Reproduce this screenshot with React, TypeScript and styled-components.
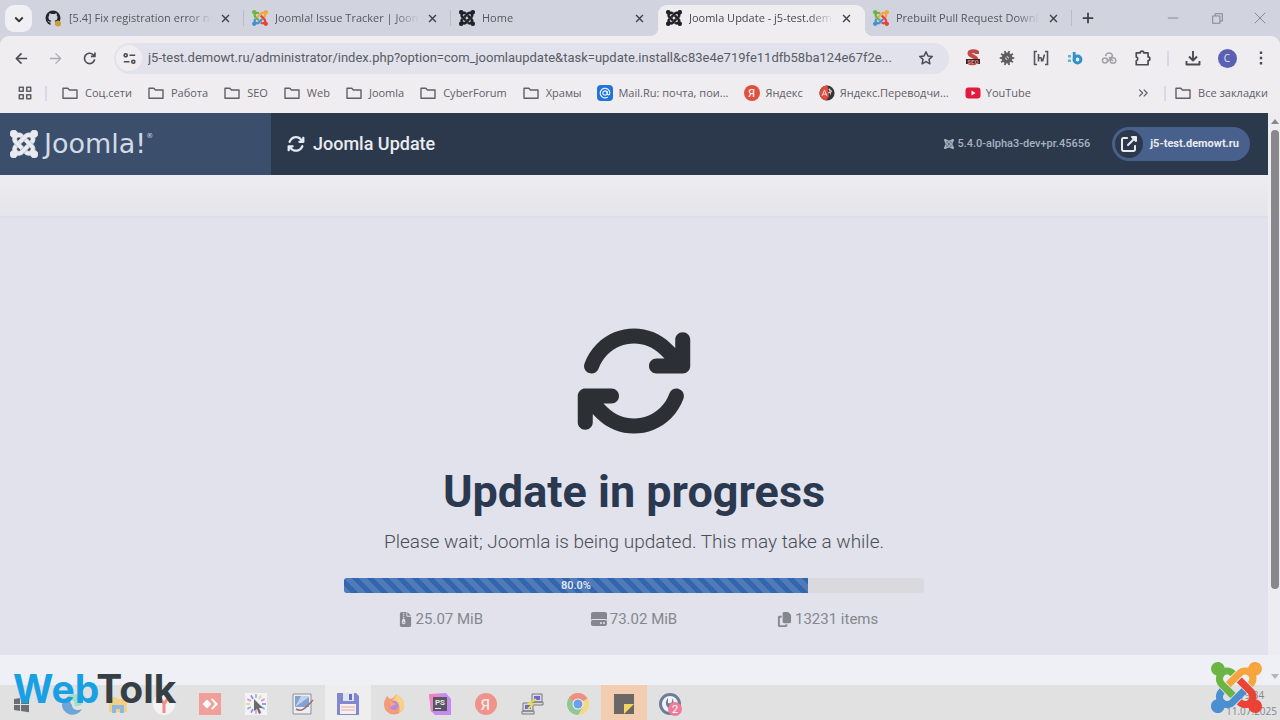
import React from 'react';
import styled, { createGlobalStyle, css } from 'styled-components';
import {
  FaArrowsRotate,
  FaCopy,
  FaFileZipper,
  FaHardDrive,
  FaUpRightFromSquare,
} from 'react-icons/fa6';

const ui = '"Open Sans", "Noto Sans", sans-serif';

const Global = createGlobalStyle`
  *, *::before, *::after { box-sizing: border-box; }
  body { margin: 0; background: #e1e2eb; font-family: Roboto, sans-serif; }
  button { border: 0; padding: 0; background: none; font: inherit; color: inherit; cursor: pointer; }
  a { color: inherit; text-decoration: none; }
  svg { display: block; flex: none; }
`;

const Screen = styled.div`
  display: flex;
  flex-direction: column;
  min-height: 100vh;
`;

/* ---------- browser chrome ---------- */

const TabStrip = styled.div`
  display: flex;
  height: 36px;
  padding-left: 5px;
  background: #d1d4df;
  font: 11px/16px ${ui};
  color: #55575f;
`;

const TabSearch = styled.button`
  display: grid;
  place-items: center;
  width: 27px;
  height: 27px;
  margin: 5px 5px 0 0;
  border-radius: 9px;
  background: #f0eff4;
`;

const Tab = styled.div<{ $active?: boolean; $line?: boolean }>`
  position: relative;
  display: flex;
  align-items: center;
  flex: 0 1 207px;
  min-width: 0;
  gap: 7px;
  height: 31px;
  margin-top: 5px;
  padding: 0 13px 5px 8px;
  ${(p) =>
    p.$line &&
    css`
      &::after {
        content: '';
        position: absolute;
        right: 0;
        top: 5px;
        width: 1px;
        height: 16px;
        background: #b9bcc8;
      }
    `}
  ${(p) =>
    p.$active &&
    css`
      border-radius: 9px 9px 0 0;
      background: #f0edf1;
      color: #45464d;
      &::before,
      &::after {
        content: '';
        position: absolute;
        bottom: 0;
        width: 8px;
        height: 8px;
      }
      &::before {
        left: -8px;
        background: radial-gradient(circle at 0 0, transparent 8px, #f0edf1 8px);
      }
      &::after {
        right: -8px;
        background: radial-gradient(circle at 100% 0, transparent 8px, #f0edf1 8px);
      }
    `}
`;

const TabTitle = styled.span`
  flex: 1;
  min-width: 0;
  overflow: hidden;
  white-space: nowrap;
  mask-image: linear-gradient(to right, #000 calc(100% - 24px), transparent);
`;

const IconButton = styled.button<{ $w?: number }>`
  display: grid;
  place-items: center;
  flex: none;
  width: ${(p) => p.$w ?? 34}px;
  height: 26px;
`;

const NewTab = styled(IconButton)`
  margin: 5px 0 0 1px;
`;

const WindowControls = styled.div`
  display: flex;
  align-items: center;
  margin-left: auto;
  color: #85878f;
`;

const Toolbar = styled.div`
  display: flex;
  align-items: center;
  height: 44px;
  padding: 0 2px 0 4px;
  border-radius: 9px 9px 0 0;
  background: #f0edf1;
  color: #4b4c52;
`;

const ToolbarBack = styled.div`
  background: #d1d4df;
`;

const AddressBar = styled.div`
  display: flex;
  align-items: center;
  flex: 1;
  min-width: 0;
  height: 31px;
  margin: 0 7px 0 8px;
  padding: 0 8px 0 2px;
  border-radius: 16px;
  background: #e1e2ec;
`;

const SiteInfo = styled(IconButton)`
  border-radius: 13px;
  background: #f0edf1;
`;

const Address = styled.input`
  flex: 1;
  min-width: 0;
  margin-left: 6px;
  padding: 0;
  border: 0;
  outline: 0;
  background: none;
  font: 13px/20px Roboto, sans-serif;
  color: #5a5b63;
  text-overflow: ellipsis;
`;

const Divider = styled.span<{ $gap: number }>`
  flex: none;
  width: 2px;
  height: 15px;
  margin: 0 ${(p) => p.$gap}px;
  background: #d6d9ea;
`;

const Avatar = styled.span`
  display: grid;
  place-items: center;
  width: 19px;
  height: 19px;
  border-radius: 50%;
  background: #5a60b4;
  color: #e4e5f5;
  font: 10px/12px ${ui};
`;

const Bookmarks = styled.nav`
  display: flex;
  align-items: center;
  height: 33px;
  padding: 0 12px 7px 8px;
  background: #f0edf1;
  font: 11px/16px ${ui};
  color: #5f6066;
`;

const BookmarkList = styled.div`
  display: flex;
  flex: 1;
  min-width: 0;
  gap: 16px;
  margin-left: 12px;
  overflow: hidden;
`;

const Bookmark = styled.a<{ $site?: boolean }>`
  display: flex;
  align-items: center;
  gap: ${(p) => (p.$site ? 5 : 7)}px;
  white-space: nowrap;
`;

/* ---------- page ---------- */

const Viewport = styled.div`
  display: flex;
  flex: 1;
`;

const Page = styled.div`
  display: flex;
  flex-direction: column;
  flex: 1;
  min-width: 0;
`;

const Header = styled.header`
  display: flex;
  align-items: center;
  height: 62px;
  padding-right: 18px;
  background: #2c394d;
  color: #e9ebf0;
`;

const Brand = styled.a`
  display: flex;
  align-items: center;
  align-self: stretch;
  gap: 6px;
  width: 271px;
  padding-left: 10px;
  background: #3b4f6d;
`;

const Wordmark = styled.span`
  display: flex;
  font: 400 27px/32px "DejaVu Sans", sans-serif;
  color: #d3dae6;
`;

const Registered = styled.small`
  font-size: 7px;
  line-height: 16px;
`;

const PageTitle = styled.h1`
  display: flex;
  align-items: center;
  flex: 1;
  gap: 8px;
  margin: 0 0 0 16px;
  font: 500 18px/24px Roboto, sans-serif;
`;

const Version = styled.span`
  display: flex;
  align-items: center;
  gap: 3px;
  margin-right: 22px;
  font: 500 11px/16px Roboto, sans-serif;
  color: #a9b1c0;
`;

const SiteLink = styled.a`
  display: flex;
  align-items: center;
  gap: 7px;
  height: 34px;
  padding: 0 11px 0 3px;
  border-radius: 17px;
  background: #47618c;
  font: 700 11px/16px Roboto, sans-serif;
`;

const LinkBadge = styled.span`
  display: grid;
  place-items: center;
  width: 28px;
  height: 28px;
  border-radius: 50%;
  background: #2c394d;
`;

const Subhead = styled.div`
  height: 41px;
  background: linear-gradient(#edecf0, #e5e4ea);
`;

const UpdateCard = styled.main`
  display: flex;
  flex-direction: column;
  align-items: center;
  flex: 1;
  padding: 103px 16px 24px;
  border-top: 2px solid #dcdeea;
  background: #e1e2eb;
  color: #2c2f34;
`;

const Heading = styled.h2`
  margin: 24px 0 8px;
  font: 700 45px/54px Roboto, sans-serif;
  color: #2b3950;
`;

const Lead = styled.p`
  margin: 0 0 21px;
  font: 300 19px/30px Roboto, sans-serif;
  color: #4a4d55;
`;

const Progress = styled.div`
  width: 47%;
  height: 15px;
  border-radius: 3px;
  background: #d9d9de;
  overflow: hidden;
`;

const ProgressFill = styled.div`
  height: 100%;
  background: linear-gradient(
      45deg,
      rgba(255, 255, 255, 0.14) 25%,
      transparent 25%,
      transparent 50%,
      rgba(255, 255, 255, 0.14) 50%,
      rgba(255, 255, 255, 0.14) 75%,
      transparent 75%
    )
    0 0 / 15px 15px #3266ae;
  color: #e8ecf5;
  font: 500 11px/15px Roboto, sans-serif;
  text-align: center;
`;

const Stats = styled.div`
  display: grid;
  grid-template-columns: repeat(3, 1fr);
  width: 47%;
  margin-top: 14px;
`;

const Stat = styled.span`
  display: flex;
  align-items: center;
  justify-content: center;
  gap: 3px;
  font: 15px/24px Roboto, sans-serif;
  color: #85878f;
`;

const Scrollbar = styled.div`
  display: flex;
  flex-direction: column;
  align-items: center;
  width: 12px;
  padding: 6px 0 66px 2px;
  background: #edecf0;
`;

const Thumb = styled.div`
  width: 8px;
  flex: 1;
  margin-top: 6px;
  border-radius: 4px;
  background: #88888c;
`;

/* ---------- desktop bar with the channel branding ---------- */

const Dock = styled.footer`
  position: relative;
`;

const Haze = styled.div`
  display: flex;
  justify-content: flex-end;
  align-items: flex-end;
  height: 30px;
  padding: 0 0 6px;
  background: #eff0f5;
`;

const Taskbar = styled.div`
  display: flex;
  height: 35px;
  background: #e1e1e2;
`;

const Task = styled.button<{ $bg?: string; $first?: boolean }>`
  display: grid;
  place-items: center;
  flex: none;
  width: ${(p) => (p.$first ? 49 : 46)}px;
  padding-top: 3px;
  background: ${(p) => p.$bg ?? 'transparent'};
`;

const Clock = styled.time`
  margin: 2px 3px 0 auto;
  font: 10px/16px ${ui};
  color: #85858a;
  text-align: center;
  white-space: pre-line;
`;

const ChannelName = styled.div`
  position: absolute;
  left: 13px;
  top: 12px;
  font: 700 39px/44px Inter, sans-serif;
  color: #363f45;
`;

const ChannelAccent = styled.span`
  color: #18a0e4;
`;

const CornerLogo = styled.div`
  position: absolute;
  right: 18px;
  top: 7px;
`;

/* ---------- drawings ---------- */

const armPaths = [
  'M.6 92.1C.6 58.8 27.4 32 60.4 32c30 0 54.5 21.9 59.2 50.2 32.6-7.6 67.1.6 96.5 30l-44.3 44.3c-20.5-20.5-42.6-16.3-55.4-3.5-14.3 14.3-14.3 37.9 0 52.2l99.5 99.5-44 44.3c-87.7-87.2-49.7-49.7-99.8-99.7-26.8-26.5-35-64.8-24.8-98.9C20.4 144.6.6 120.7.6 92.1z',
  'M130.1 208.5l44.3 44.3c10-10 89.7-89.7 99.7-99.8 14.3-14.3 37.6-14.3 51.9 0 12.8 12.8 17 35-3.5 55.4l44 44.3c31.2-31.2 38.5-67.6 28.9-101.2 29.2-4.1 51.9-29.2 51.9-59.5 0-33.2-26.8-60.1-59.8-60.1-30.3 0-55.4 22.5-59.5 51.6-33.8-9.9-71.7-1.5-98.3 25.1-18.3 19.1-71.1 71.5-99.6 99.9z',
  'M396.4 360.7c8.2-32.7-.9-68.5-26.3-93.9-11.8-12.2 5 4.7-99.5-99.7l-44.3 44.3 99.7 99.7c14.3 14.3 14.3 37.6 0 51.9-12.8 12.8-35 17-55.4-3.5l-44 44.3c27.6 30.2 68 38.8 102.7 28 5.5 27.4 29.7 48.1 58.9 48.1 33 0 59.8-26.8 59.8-60.1 0-30.2-22.5-55-51.6-59.1z',
  'M312.1 307.6l-44-44.3c-87 86.4-50.4 50.4-99.7 99.8-14.3 14.3-37.6 14.3-51.9 0-13.1-13.4-16.9-35.3 3.2-55.4l-44-44.3c-30.2 30.2-38 65.2-29.5 98.3-26.7 6-46.2 29.9-46.2 58.2C0 453.2 26.8 480 59.8 480c28.6 0 52.5-19.8 58.6-46.7 32.7 8.2 68.5-.6 94.2-26 32.1-32 12.2-12.4 99.5-99.7z',
];

const brandColors = ['#6cb544', '#f6a53c', '#ea4335', '#4a8fd0'];

const JoomlaMark = ({ size, color }: { size: number; color?: string }) => (
  <svg width={size} height={size} viewBox="0 32 448 448" aria-hidden="true">
    {armPaths.map((d, i) => (
      <path key={i} d={d} fill={color ?? brandColors[i]} stroke={color} strokeWidth={color ? 12 : 0} />
    ))}
  </svg>
);

type LineProps = { d: string; size?: number; w?: number; color?: string };
const Line = ({ d, size = 16, w = 1.5, color = 'currentColor' }: LineProps) => (
  <svg width={size} height={size} viewBox="0 0 16 16" fill="none" stroke={color} strokeWidth={w} strokeLinejoin="round" aria-hidden="true">
    <path d={d} />
  </svg>
);

const Folder = () => <Line d="M1 3.200h4.800l1.600 1.800H15v8.300H1z" w={1.4} />;

const GitHubMark = () => (
  <svg width="17" height="17" viewBox="0 0 17 17" aria-hidden="true">
    <circle cx="8" cy="8" r="7.500" fill="#23242c" />
    <path d="M5.500 16v-3.500C3.800 12.800 3.500 11.500 2.500 11c1.200-.3 1.800 1 3.200.7.1-.5.300-.8.6-1C4.400 10.300 3.500 9.200 3.500 7.400c0-.9.300-1.600.8-2.100-.2-.6-.1-1.400.1-2 .8 0 1.500.4 2 .8 1-.2 2.200-.2 3.200 0 .6-.4 1.200-.8 2-.8.2.6.300 1.400.1 2 .5.500.8 1.200.8 2.100 0 1.800-.9 2.900-2.800 3.300.5.400.8 1 .8 1.800V16z" fill="#d1d4df" />
    <circle cx="13" cy="13.500" r="3" fill="#c6a233" />
  </svg>
);

const Burst = ({ n, r1, r2, w, colors }: { n: number; r1: number; r2: number; w: number; colors: string[] }) => (
  <g strokeWidth={w}>
    {Array.from({ length: n }, (_, i) => {
      const a = (i / n) * Math.PI * 2;
      return (
        <line key={i} x1={11 + r1 * Math.cos(a)} y1={11 + r1 * Math.sin(a)} x2={11 + r2 * Math.cos(a)} y2={11 + r2 * Math.sin(a)} stroke={colors[i % colors.length]} />
      );
    })}
  </g>
);

const svgText = { fontFamily: 'Roboto, sans-serif', textAnchor: 'middle' as const };

const SeoIcon = () => (
  <svg width="16" height="18" viewBox="0 0 16 18" aria-hidden="true">
    <path d="M12 5V3.200C10 1.800 4.500 1.500 4.500 4.500S11.500 7 11.500 11 5.500 15 3.500 13" fill="none" stroke="#c04a45" strokeWidth="4" />
    <rect x="1" y="10" width="14" height="5" fill="#3a1f22" />
    <text x="8" y="15" {...svgText} fontSize="6" fontWeight="900" fill="#e08a84">SEO</text>
  </svg>
);

const GearIcon = () => (
  <svg width="16" height="16" viewBox="0 0 22 22" aria-hidden="true">
    <Burst n={10} r1={5} r2={10} w={2.5} colors={['#5f5f62']} />
    <circle cx="11" cy="11" r="5" fill="none" stroke="#5f5f62" strokeWidth="5" />
    <path d="M7 7l8 8" stroke="#5f5f62" strokeWidth="2" />
  </svg>
);

const BracketIcon = () => (
  <svg width="18" height="18" viewBox="0 0 18 18" fill="none" stroke="#55565c" strokeWidth="1.600" aria-hidden="true">
    <path d="M5 2.500H2.500v13H5M13 2.500h2.500v13H13M6.500 5v7.500M6.500 9.500c2-1.500 3-.5 3 .5v2.500M12.500 5.500l-2 7" />
  </svg>
);

const BIcon = () => (
  <svg width="16" height="16" viewBox="0 0 16 16" aria-hidden="true">
    <path d="M1 5h3v2.500H1zM1 9.500h3V12H1z" fill="#58b6e0" />
    <path d="M7.200 2v9" stroke="#2d93cf" strokeWidth="2.800" />
    <circle cx="10.500" cy="9.500" r="3.400" fill="none" stroke="#2d93cf" strokeWidth="3" />
  </svg>
);

const CloudIcon = () => (
  <svg width="16" height="16" viewBox="0 0 16 16" fill="none" stroke="#a3a2a6" strokeWidth="1.500" aria-hidden="true">
    <circle cx="4" cy="10.500" r="2.500" />
    <circle cx="12" cy="10.500" r="2.800" />
    <path d="M4.500 6C5.500 2 11 2 11.500 6L6 12M8 7l4 4" />
  </svg>
);

const MailIcon = () => (
  <svg width="16" height="16" viewBox="0 0 16 16" aria-hidden="true">
    <rect width="16" height="16" rx="4" fill="#2273dc" />
    <g fill="none" stroke="#e6effb" strokeWidth="1.200">
      <circle cx="8" cy="8" r="2.200" />
      <path d="M10.200 6v2.500c0 2 2.600 1.600 2.600-.5a4.800 4.800 0 1 0-2 4" />
    </g>
  </svg>
);

const YandexIcon = ({ size = 16, color = '#e0503f' }: { size?: number; color?: string }) => (
  <svg width={size} height={size} viewBox="0 0 16 16" aria-hidden="true">
    <circle cx="8" cy="8" r="8" fill={color} />
    <text x="7.500" y="12" {...svgText} fontSize="11" fontWeight="500" fill="#fbe9e6">Я</text>
  </svg>
);

const TranslateIcon = () => (
  <svg width="16" height="16" viewBox="0 0 16 16" aria-hidden="true">
    <circle cx="8" cy="8" r="7.600" fill="#35353a" />
    <path d="M8.500.4A7.600 7.600 0 0 0 7 15.500l3-4z" fill="#dd4c3e" />
    <path d="M3 11l2.500-6L8 11M4 9.200h3M9.500 4.500l3 1M9 8l4-1.500M10.500 3.500l1 6" stroke="#e9d8d8" fill="none" />
  </svg>
);

const YouTubeIcon = () => (
  <svg width="16" height="16" viewBox="0 0 16 16" aria-hidden="true">
    <rect x=".5" y="2.500" width="15" height="11" rx="3" fill="#e3193f" />
    <path d="M6.500 5.500l4 2.500-4 2.500z" fill="#fff" />
  </svg>
);

const taskIcons: Record<string, React.ReactNode> = {
  Start: <path d="M1 6l6-1v6H1zM8 5l8-1.200V11H8zM1 12h6v6l-6-1zM8 12h8v7.200L8 18z" fill="#6d6e73" />,
  Edge: (
    <>
      <path d="M1 11a10.500 10 0 0 1 13-7c-5 0-6 5-3 8 0 5 6 6 10 4A10.500 10 0 0 1 1 11z" fill="#6ca5d8" />
      <path d="M7 3a9 7.500 0 0 1 15 6c-1 4-5 5-9 4 2-4-2-6-6-10z" fill="#a3dfc5" />
    </>
  ),
  Files: (
    <>
      <path d="M2 4h7l2 2h9v13H2z" fill="#f3d184" />
      <path d="M5 20v-8h12v8h-4v-4H9v4z" fill="#8db9e0" />
    </>
  ),
  'Yandex Browser': (
    <>
      <circle cx="11" cy="11" r="11" fill="#f7f2f3" />
      <path d="M7 5l4 6 4-6M11 11v9" stroke="#f08d86" strokeWidth="3" fill="none" />
    </>
  ),
  AnyDesk: (
    <>
      <rect width="22" height="22" fill="#f19f9a" />
      <path d="M8 6.500L3.500 11 8 15.500 12.500 11zM12 6.500l1.500-1L19 11l-5.500 5.500-1.500-1L16 11z" fill="#fff" />
    </>
  ),
  Clicker: (
    <>
      <rect width="22" height="22" fill="#f3f2f4" />
      <Burst n={12} r1={6} r2={10} w={1.5} colors={['#8b7be0', '#7fb0e5', '#e9cf7a', '#d98be0']} />
      <path d="M9 6v12l3-2 2 5 2-1-2-5h4z" fill="#69696e" />
    </>
  ),
  Notes: (
    <>
      <path d="M2 1h18v20H2z" fill="#eceef2" stroke="#8e9097" />
      <path d="M4 3h14v11H4z" fill="#7fa3d4" />
      <path d="M4 14L18 4v-1H10z" fill="#bfd2ea" />
      <path d="M5 16c5 3 8 1 17-9" stroke="#a5686e" strokeWidth="1.500" fill="none" />
    </>
  ),
  'Total Commander': (
    <>
      <path d="M0 0h19l3 3v19H0z" fill="#8089cf" />
      <path d="M6 0h11v8H6z" fill="#dfe4ee" />
      <path d="M12 1h3v6h-3z" fill="#6870bd" />
      <path d="M3 11h16v10H3z" fill="#f7efef" />
      <path d="M4 14h14M4 17h14" stroke="#eaa7a0" />
    </>
  ),
  Firefox: (
    <>
      <path d="M1 12c0-5 2-7 3-9l3 3c3-1 5-2 6-5 5 3 8 7 8 11a10 9.500 0 0 1-20 0z" fill="#f49b78" />
      <path d="M13 1c5 3 8 7 8 11 0 3-2 6-5 8 2-8-1-12-7-13 2-1 4-3 4-6z" fill="#f7d382" />
      <circle cx="11" cy="12.500" r="4.500" fill="#b68adf" />
      <path d="M7 8l6 3-6 3z" fill="#f8a77b" />
    </>
  ),
  PhpStorm: (
    <>
      <path d="M0 1l17-1 5 6v16H6L2 18z" fill="#c58af0" />
      <path d="M0 1h11L5 17l-3 2z" fill="#ee83c4" />
      <rect x="4" y="4" width="14" height="14" fill="#5a5660" />
      <text x="11" y="12" {...svgText} fontSize="8" fontWeight="700" fill="#e8e6ea">PS</text>
      <path d="M6 15.500h6" stroke="#e8e6ea" />
    </>
  ),
  PuTTY: (
    <>
      <path d="M11 1h10v8H11zM10 9h12v3H10zM2 10h10v8H2zM1 18h12v3H1z" fill="#dadbde" stroke="#77787f" />
      <path d="M13 3h6v4h-6zM4 12h6v4H4z" fill="#6f68cf" />
      <path d="M15 6l-8 5h5l-5 5" stroke="#e6dc5e" strokeWidth="1.800" fill="none" />
    </>
  ),
  Chrome: (
    <>
      <circle cx="11" cy="11" r="11" fill="#f5d980" />
      <path d="M11 11L1.500 5.500A11 11 0 0 1 20.500 5.500z" fill="#ee8f84" />
      <path d="M11 11L1.500 5.500A11 11 0 0 0 11 22l5-8z" fill="#8fc79b" />
      <circle cx="11" cy="11" r="5.500" fill="#f5f5f7" />
      <circle cx="11" cy="11" r="4.500" fill="#6f9fe6" />
    </>
  ),
  Sticky: (
    <>
      <path d="M1 1h20v20H1z" fill="#6a6764" />
      <path d="M11 21V11h10z" fill="#f2d560" />
    </>
  ),
  Messages: (
    <>
      <circle cx="11" cy="11" r="9.500" fill="#f1f2f5" stroke="#6d7c99" strokeWidth="3" />
      <path d="M9 5c-3 3-3 9 2 11 4-2 5-6 2-11 1 5-2 6-4 5z" fill="#6d7c99" />
      <circle cx="16" cy="16" r="7" fill="#ee7c98" />
      <text x="16" y="20" {...svgText} fontSize="11" fill="#fff">2</text>
    </>
  ),
};

const tasks = ['Start', 'Edge', 'Files', 'Yandex Browser', 'AnyDesk', 'Clicker', 'Notes', 'Total Commander', 'Firefox', 'PhpStorm', 'Yandex', 'PuTTY', 'Chrome', 'Sticky', 'Messages'];
const taskBg: Record<string, string> = { 'Total Commander': '#eeeeef', Sticky: '#f3cdb0' };

const tabs = [
  { title: '[5.4] Fix registration error no', icon: <GitHubMark />, line: true },
  { title: 'Joomla! Issue Tracker | Joom', icon: <JoomlaMark size={16} />, line: true },
  { title: 'Home', icon: <JoomlaMark size={16} color="#202127" /> },
  { title: 'Joomla Update - j5-test.dem', icon: <JoomlaMark size={16} color="#202127" />, active: true },
  { title: 'Prebuilt Pull Request Downl', icon: <JoomlaMark size={16} />, line: true },
];

const bookmarks: { label: string; icon?: React.ReactNode }[] = [
  { label: 'Соц.сети' },
  { label: 'Работа' },
  { label: 'SEO' },
  { label: 'Web' },
  { label: 'Joomla' },
  { label: 'CyberForum' },
  { label: 'Храмы' },
  { label: 'Mail.Ru: почта, пои...', icon: <MailIcon /> },
  { label: 'Яндекс', icon: <YandexIcon /> },
  { label: 'Яндекс.Переводчи...', icon: <TranslateIcon /> },
  { label: 'YouTube', icon: <YouTubeIcon /> },
];

const extensions = [
  { name: 'SEO', icon: <SeoIcon /> },
  { name: 'Settings helper', icon: <GearIcon /> },
  { name: 'Headings', icon: <BracketIcon /> },
  { name: 'Bookmarks sync', icon: <BIcon /> },
  { name: 'Cloud', icon: <CloudIcon /> },
  { name: 'Extensions', icon: <Line size={18} d="M2 3.500h3.500a1.600 1.600 0 0 1 3.200 0H12.500V7a1.600 1.600 0 0 1 0 3.200V14H2v-3.500a1.800 1.800 0 0 0 0-3.500z" /> },
];

const percent = 80;

export default function App() {
  return (
    <Screen>
      <Global />
      <TabStrip>
        <TabSearch aria-label="Search tabs">
          <Line size={12} w={2.4} d="M3 6l5 5 5-5" color="#33343a" />
        </TabSearch>
        {tabs.map((t) => (
          <Tab key={t.title} $active={t.active} $line={t.line}>
            {t.icon}
            <TabTitle>{t.title}</TabTitle>
            <IconButton $w={12} aria-label="Close tab">
              <Line size={11} w={2} d="M3 3l10 10M13 3L3 13" color="#3f4046" />
            </IconButton>
          </Tab>
        ))}
        <NewTab $w={30} aria-label="New tab">
          <Line size={14} w={2} d="M8 2v12M2 8h12" color="#3f4046" />
        </NewTab>
        <WindowControls>
          <IconButton $w={44} aria-label="Minimize"><Line size={12} w={1.2} d="M1 8h14" /></IconButton>
          <IconButton $w={44} aria-label="Restore"><Line size={11} d="M1 4.500h10.500V15H1zM4.500 4V1H15v10.500h-3" /></IconButton>
          <IconButton $w={41} aria-label="Close"><Line size={12} w={1.3} d="M1 1l14 14M15 1L1 15" /></IconButton>
        </WindowControls>
      </TabStrip>

      <ToolbarBack>
        <Toolbar>
          <IconButton aria-label="Back"><Line size={15} w={1.8} d="M14 8H3M8 2.500L2.500 8 8 13.500" /></IconButton>
          <IconButton aria-label="Forward"><Line size={15} w={1.4} color="#adacb2" d="M2 8h11M8 2.500L13.500 8 8 13.500" /></IconButton>
          <IconButton aria-label="Reload"><Line size={15} w={1.8} d="M13.500 9a5.500 5.500 0 1 1-1.500-5l1.500 1.500M13.800 1.500v4.300H9.500" /></IconButton>
          <AddressBar>
            <SiteInfo $w={26} aria-label="Site information">
              <Line size={13} w={2} d="M8 4h7M1 12h7M5.200 4a1.900 1.900 0 1 1-3.800 0 1.900 1.900 0 0 1 3.800 0zM14.600 12a1.900 1.900 0 1 1-3.800 0 1.900 1.900 0 0 1 3.800 0z" />
            </SiteInfo>
            <Address
              aria-label="Address"
              readOnly
              value="j5-test.demowt.ru/administrator/index.php?option=com_joomlaupdate&task=update.install&c83e4e719fe11dfb58ba124e67f2e..."
            />
            <IconButton $w={30} aria-label="Bookmark this page">
              <Line d="M8 1.800l1.900 4.100 4.400.5-3.300 3 .9 4.400L8 11.600l-3.900 2.200.9-4.400-3.300-3 4.400-.5z" />
            </IconButton>
          </AddressBar>
          {extensions.map((e) => (
            <IconButton key={e.name} aria-label={e.name}>{e.icon}</IconButton>
          ))}
          <Divider $gap={7} />
          <IconButton aria-label="Downloads"><Line w={1.9} d="M8 1v9M4 6.500L8 10.500l4-4M1.500 11v3.500h13V11" /></IconButton>
          <IconButton aria-label="Profile"><Avatar>C</Avatar></IconButton>
          <IconButton aria-label="Menu"><Line w={2.4} d="M8 1.500v2.400M8 6.800v2.400M8 12.100v2.400" /></IconButton>
        </Toolbar>
      </ToolbarBack>

      <Bookmarks>
        <IconButton aria-label="Apps">
          <Line size={14} w={1.8} d="M1.500 1.500h4.500v4.500H1.500zM10 1.500h4.500v4.500H10zM1.500 10h4.500v4.500H1.500zM10 10h4.500v4.500H10z" />
        </IconButton>
        <Divider $gap={3} />
        <BookmarkList>
          {bookmarks.map((b) => (
            <Bookmark key={b.label} href="#" $site={Boolean(b.icon)}>
              {b.icon ?? <Folder />}
              {b.label}
            </Bookmark>
          ))}
        </BookmarkList>
        <IconButton $w={24} aria-label="More bookmarks"><Line size={12} w={1.7} d="M3 3.500L7.500 8 3 12.500M9 3.500L13.500 8 9 12.500" /></IconButton>
        <Divider $gap={9} />
        <Bookmark href="#"><Folder />Все закладки</Bookmark>
      </Bookmarks>

      <Viewport>
        <Page>
          <Header>
            <Brand href="#" aria-label="Joomla! home">
              <JoomlaMark size={28} color="#e9ebf0" />
              <Wordmark>Joomla!<Registered>®</Registered></Wordmark>
            </Brand>
            <PageTitle><FaArrowsRotate size={18} />Joomla Update</PageTitle>
            <Version><JoomlaMark size={10} color="#a9b1c0" />5.4.0-alpha3-dev+pr.45656</Version>
            <SiteLink href="#">
              <LinkBadge><FaUpRightFromSquare size={16} /></LinkBadge>
              j5-test.demowt.ru
            </SiteLink>
          </Header>
          <Subhead />
          <UpdateCard>
            <FaArrowsRotate size={120} />
            <Heading>Update in progress</Heading>
            <Lead>Please wait; Joomla is being updated. This may take a while.</Lead>
            <Progress role="progressbar" aria-label="Update progress" aria-valuenow={percent}>
              <ProgressFill style={{ width: `${percent}%` }}>{percent.toFixed(1)}%</ProgressFill>
            </Progress>
            <Stats>
              <Stat><FaFileZipper size={15} />25.07 MiB</Stat>
              <Stat><FaHardDrive size={16} />73.02 MiB</Stat>
              <Stat><FaCopy size={15} />13231 items</Stat>
            </Stats>
          </UpdateCard>
        </Page>
        <Scrollbar>
          <svg width="8" height="5" viewBox="0 0 8 5" aria-hidden="true"><path d="M0 5l4-5 4 5z" fill="#88888c" /></svg>
          <Thumb />
        </Scrollbar>
      </Viewport>

      <Dock>
        <Haze>
          <svg width="9" height="5" viewBox="0 0 9 5" aria-hidden="true"><path d="M0 0h8L4 5z" fill="#b3b3b8" /></svg>
        </Haze>
        <Taskbar>
          {tasks.map((name, i) => (
            <Task key={name} $bg={taskBg[name]} $first={i === 0} aria-label={name}>
              {name === 'Yandex' ? (
                <YandexIcon size={22} color="#f0938a" />
              ) : (
                <svg width="23" height="23" viewBox="0 0 23 23" aria-hidden="true">{taskIcons[name]}</svg>
              )}
            </Task>
          ))}
          <Clock>{'19:34\n11.07.2025'}</Clock>
        </Taskbar>
        <ChannelName><ChannelAccent>Web</ChannelAccent>Tolk</ChannelName>
        <CornerLogo><JoomlaMark size={51} /></CornerLogo>
      </Dock>
    </Screen>
  );
}
